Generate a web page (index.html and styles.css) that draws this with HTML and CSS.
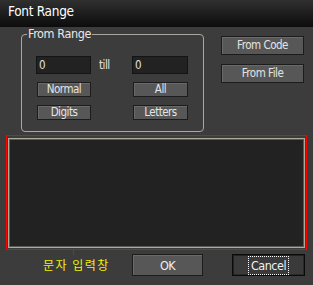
FILE: index.html
```html
<!DOCTYPE html>
<html>
<head>
<meta charset="utf-8">
<link rel="stylesheet" href="styles.css">
</head>
<body>
<div class="window">
  <div class="titlebar">Font Range</div>
  <div class="top">
    <div class="group">
      <span class="legend">From Range</span>
      <div class="row">
        <div class="input in-left">0</div>
        <div class="till">till</div>
        <div class="input in-right">0</div>
      </div>
      <div class="row row-btn">
        <div class="sbtn b-left">Normal</div>
        <div class="sbtn b-right">All</div>
      </div>
      <div class="row row-btn">
        <div class="sbtn b-left">Digits</div>
        <div class="sbtn b-right">Letters</div>
      </div>
    </div>
    <div class="side">
      <div class="mbtn">From Code</div>
      <div class="mbtn">From File</div>
    </div>
  </div>
  <div class="memo-frame">
    <div class="memo"></div>
  </div>
  <div class="bottom">
    <div class="label">문자 입력창</div>
    <div class="btn ok">OK</div>
    <div class="btn cancel"><span class="focus">Cancel</span></div>
  </div>
</div>
</body>
</html>
```
FILE: styles.css
```css
html, body {
  margin: 0;
  padding: 0;
  background: #3c3c3c;
}
.window {
  width: 313px;
  height: 285px;
  overflow: hidden;
  background: #3c3c3c;
  font-family: "DejaVu Sans Condensed", "Liberation Sans", sans-serif;
  font-size: 11.5px;
  letter-spacing: -0.5px;
  color: #e2e2e2;
}
.titlebar {
  height: 27px;
  box-sizing: border-box;
  padding-left: 8px;
  line-height: 22px;
  font-size: 13.5px;
  letter-spacing: -0.3px;
  color: #ffffff;
  background: linear-gradient(#303030, #0c0c0c);
}
.top {
  display: flex;
  padding-top: 7px;
}
.group {
  position: relative;
  margin-left: 21px;
  width: 183px;
  height: 98px;
  box-sizing: border-box;
  border: 1px solid #aaa89c;
  border-radius: 4px;
  padding: 21px 0 0 14px;
}
.legend {
  position: absolute;
  left: 5px;
  top: -8px;
  padding: 0 1px;
  background: #3c3c3c;
  font-size: 12.5px;
  letter-spacing: -0.4px;
  line-height: 14px;
  color: #e8e8e8;
}
.row {
  display: flex;
  align-items: center;
}
.row-btn {
  margin-top: 8px;
}
.input {
  height: 18px;
  box-sizing: border-box;
  background: #222222;
  border: 1px solid #141414;
  padding-left: 2px;
  line-height: 16px;
  color: #e0e0e0;
}
.in-left { width: 55px; }
.in-right { width: 56px; }
.till {
  width: 41px;
  box-sizing: border-box;
  padding-left: 8px;
  line-height: 16px;
}
.sbtn {
  height: 15px;
  box-sizing: border-box;
  background: #575757;
  border: 1px solid #1c1c1c;
  box-shadow: inset 1px 1px 0 #6a6a6a;
  text-align: center;
  line-height: 13px;
  color: #e4e4e4;
}
.b-left { width: 54px; margin-left: 1px; }
.b-right { width: 55px; margin-left: 42px; }
.side {
  display: flex;
  flex-direction: column;
  gap: 9px;
  margin-left: 17px;
  padding-top: 2px;
}
.mbtn {
  width: 83px;
  height: 19px;
  box-sizing: border-box;
  background: #575757;
  border: 1px solid #1c1c1c;
  box-shadow: inset 1px 1px 0 #6a6a6a;
  text-align: center;
  line-height: 17px;
  color: #e4e4e4;
}
.memo-frame {
  position: relative;
  margin-top: 3px;
  margin-left: 6px;
  width: 301px;
  height: 115px;
  box-sizing: border-box;
  border: 1px solid #ff0000;
  padding: 2px 1px 1px 1px;
}
.memo-frame::after {
  content: "";
  position: absolute;
  left: 66px;
  bottom: -6px;
  width: 1px;
  height: 5px;
  background: #ff0000;
}
.memo {
  height: 100%;
  box-sizing: border-box;
  background: #222222;
  border: 1px solid #aeaa98;
  box-shadow: inset 0 0 0 1px #5a5a55;
}
.bottom {
  display: flex;
  align-items: center;
  margin-top: 4px;
}
.label {
  flex: 0 0 89px;
  width: 89px;
  margin-left: 43px;
  font-family: "Noto Sans CJK KR", sans-serif;
  font-size: 12px;
  letter-spacing: 1.5px;
  color: #f2f200;
  white-space: nowrap;
  line-height: 14px;
}
.btn {
  height: 22px;
  box-sizing: border-box;
  display: flex;
  align-items: center;
  justify-content: center;
  font-size: 12.5px;
  color: #f0f0f0;
}
.ok {
  width: 71px;
  flex: 0 0 71px;
  background: #575757;
  border: 1px solid #1c1c1c;
  box-shadow: inset 1px 1px 0 #6a6a6a;
}
.cancel {
  width: 73px;
  flex: 0 0 73px;
  margin-left: 29px;
  background: #3a3a3a;
  border: 1px solid #0a0a0a;
  box-shadow: inset 1px 1px 0 #222, inset -1px -1px 0 #2a2a2a;
}
.focus {
  display: inline-block;
  outline: 1px dotted #ffffff;
  outline-offset: 0;
  padding: 1px 2px;
  line-height: 15px;
}
```
